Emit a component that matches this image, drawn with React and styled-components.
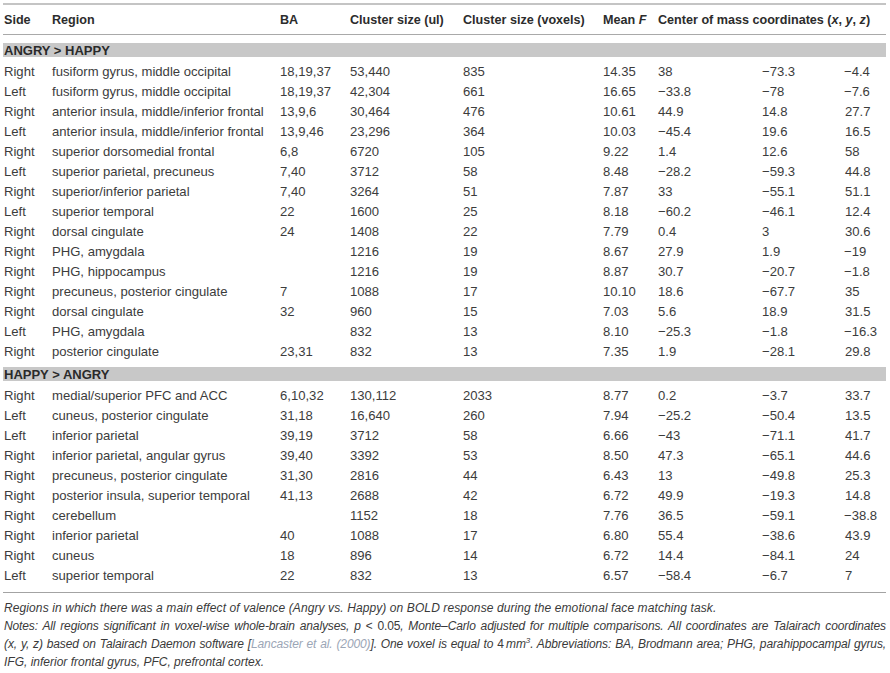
import React from "react";
import styled, { createGlobalStyle } from "styled-components";

const Global = createGlobalStyle`
  html, body { margin: 0; padding: 0; background: #fff; }
  body { font-family: "Liberation Sans", Arial, Helvetica, sans-serif; color: #3a3a3a; }
`;

const COLS = "48px 228px 70px 113px 140px 55px 104px 83px 1fr";

const Page = styled.div`
  width: 883px;
  padding: 3px 4px 0 3px;
`;

const TopRule = styled.div`
  border-top: 2px solid #c4c4c4;
`;

const HeaderRow = styled.div`
  display: grid;
  grid-template-columns: ${COLS};
  height: 29px;
  align-items: center;
  border-bottom: 1px solid #a9a9a9;
  font-weight: bold;
  font-size: 12.6px;
  color: #2c2c2c;
  white-space: nowrap;
`;

const HeadCell = styled.div`
  padding-left: 1px;
  grid-column: ${(p) => (p.$span ? `span ${p.$span}` : "auto")};
`;

const Band = styled.div`
  margin-top: ${(p) => (p.$first ? "8px" : "5px")};
  margin-bottom: 5px;
  height: 14px;
  line-height: 15px;
  background: #c8c8c8;
  font-weight: bold;
  font-size: 13px;
  color: #2a2a2a;
  padding-left: 1px;
`;

const Row = styled.div`
  display: grid;
  grid-template-columns: ${COLS};
  height: 20px;
  line-height: 20px;
  font-size: 13.1px;
  color: #3c3c3c;
  white-space: nowrap;
`;

const Cell = styled.div`
  padding-left: ${(p) => (p.$neg ? "0px" : "1px")};
`;

const BottomRule = styled.div`
  margin-top: 6px;
  border-top: 1px solid #a3a3a3;
`;

const CaptionBlock = styled.div`
  margin-top: 6px;
  padding-left: 1px;
  font-style: italic;
  font-size: 12px;
  line-height: 18px;
  color: #3a3a3a;
`;

const Line = styled.div`
  white-space: nowrap;
  letter-spacing: ${(p) => p.$tracking || "0px"};
  text-align: ${(p) => (p.$justify ? "justify" : "left")};
  text-align-last: ${(p) => (p.$justify ? "justify" : "left")};
`;

const Up = styled.span`
  font-style: normal;
`;

const Ref = styled.span`
  color: #9ba6b6;
`;

const Sup = styled.sup`
  font-size: 8px;
  line-height: 0;
  vertical-align: 5px;
`;

const M = "\u2212";

const angry = [
  ["Right", "fusiform gyrus, middle occipital", "18,19,37", "53,440", "835", "14.35", "38", `${M}73.3`, `${M}4.4`],
  ["Left", "fusiform gyrus, middle occipital", "18,19,37", "42,304", "661", "16.65", `${M}33.8`, `${M}78`, `${M}7.6`],
  ["Right", "anterior insula, middle/inferior frontal", "13,9,6", "30,464", "476", "10.61", "44.9", "14.8", "27.7"],
  ["Left", "anterior insula, middle/inferior frontal", "13,9,46", "23,296", "364", "10.03", `${M}45.4`, "19.6", "16.5"],
  ["Right", "superior dorsomedial frontal", "6,8", "6720", "105", "9.22", "1.4", "12.6", "58"],
  ["Left", "superior parietal, precuneus", "7,40", "3712", "58", "8.48", `${M}28.2`, `${M}59.3`, "44.8"],
  ["Right", "superior/inferior parietal", "7,40", "3264", "51", "7.87", "33", `${M}55.1`, "51.1"],
  ["Left", "superior temporal", "22", "1600", "25", "8.18", `${M}60.2`, `${M}46.1`, "12.4"],
  ["Right", "dorsal cingulate", "24", "1408", "22", "7.79", "0.4", "3", "30.6"],
  ["Right", "PHG, amygdala", "", "1216", "19", "8.67", "27.9", "1.9", `${M}19`],
  ["Right", "PHG, hippocampus", "", "1216", "19", "8.87", "30.7", `${M}20.7`, `${M}1.8`],
  ["Right", "precuneus, posterior cingulate", "7", "1088", "17", "10.10", "18.6", `${M}67.7`, "35"],
  ["Right", "dorsal cingulate", "32", "960", "15", "7.03", "5.6", "18.9", "31.5"],
  ["Left", "PHG, amygdala", "", "832", "13", "8.10", `${M}25.3`, `${M}1.8`, `${M}16.3`],
  ["Right", "posterior cingulate", "23,31", "832", "13", "7.35", "1.9", `${M}28.1`, "29.8"],
];

const happy = [
  ["Right", "medial/superior PFC and ACC", "6,10,32", "130,112", "2033", "8.77", "0.2", `${M}3.7`, "33.7"],
  ["Left", "cuneus, posterior cingulate", "31,18", "16,640", "260", "7.94", `${M}25.2`, `${M}50.4`, "13.5"],
  ["Left", "inferior parietal", "39,19", "3712", "58", "6.66", `${M}43`, `${M}71.1`, "41.7"],
  ["Right", "inferior parietal, angular gyrus", "39,40", "3392", "53", "8.50", "47.3", `${M}65.1`, "44.6"],
  ["Right", "precuneus, posterior cingulate", "31,30", "2816", "44", "6.43", "13", `${M}49.8`, "25.3"],
  ["Right", "posterior insula, superior temporal", "41,13", "2688", "42", "6.72", "49.9", `${M}19.3`, "14.8"],
  ["Right", "cerebellum", "", "1152", "18", "7.76", "36.5", `${M}59.1`, `${M}38.8`],
  ["Right", "inferior parietal", "40", "1088", "17", "6.80", "55.4", `${M}38.6`, "43.9"],
  ["Right", "cuneus", "18", "896", "14", "6.72", "14.4", `${M}84.1`, "24"],
  ["Left", "superior temporal", "22", "832", "13", "6.57", `${M}58.4`, `${M}6.7`, "7"],
];

function DataRows({ rows }) {
  return rows.map((r, i) => (
    <Row key={i}>
      {r.map((c, j) => (
        <Cell key={j} $neg={j === 8 && c.startsWith(M)}>
          {c}
        </Cell>
      ))}
    </Row>
  ));
}

export default function App() {
  return (
    <>
      <Global />
      <Page>
        <TopRule />
        <HeaderRow>
          <HeadCell>Side</HeadCell>
          <HeadCell>Region</HeadCell>
          <HeadCell>BA</HeadCell>
          <HeadCell>Cluster size (ul)</HeadCell>
          <HeadCell>Cluster size (voxels)</HeadCell>
          <HeadCell>
            Mean <i>F</i>
          </HeadCell>
          <HeadCell $span={3}>
            Center of mass coordinates (<i>x</i>, <i>y</i>, <i>z</i>)
          </HeadCell>
        </HeaderRow>
        <Band $first>ANGRY &gt; HAPPY</Band>
        <DataRows rows={angry} />
        <Band>HAPPY &gt; ANGRY</Band>
        <DataRows rows={happy} />
        <BottomRule />
        <CaptionBlock>
          <Line $tracking="0.1px">
            Regions in which there was a main effect of valence (Angry vs. Happy) on BOLD response during the emotional face matching task.
          </Line>
          <Line $justify $tracking="-0.12px">
            Notes: All regions significant in voxel-wise whole-brain analyses, p &lt; <Up>0.05</Up>, Monte–Carlo adjusted for multiple comparisons. All coordinates are Talairach coordinates
          </Line>
          <Line $justify $tracking="-0.12px">
            (x, y, z) based on Talairach Daemon software [<Ref>Lancaster et al. (2000)</Ref>]. One voxel is equal to <Up>4</Up>
            {"\u2009"}mm<Sup>3</Sup>. Abbreviations: BA, Brodmann area; PHG, parahippocampal gyrus,
          </Line>
          <Line>IFG, inferior frontal gyrus, PFC, prefrontal cortex.</Line>
        </CaptionBlock>
      </Page>
    </>
  );
}
